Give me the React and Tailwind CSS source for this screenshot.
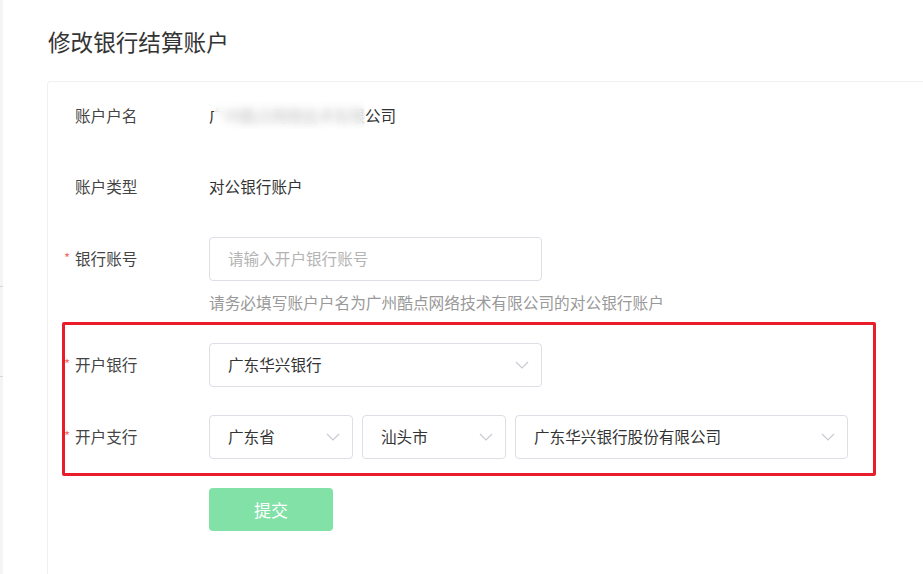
import React from "react";

const font = { fontFamily: '"Noto Sans CJK SC", "Noto Sans", sans-serif' };

const Chevron = () => (
  <svg width="14" height="8" viewBox="0 0 14 8" className="shrink-0">
    <polyline points="1,1 7,7 13,1" fill="none" stroke="#c8cbd1" strokeWidth="1.2" />
  </svg>
);

const Select = ({ value, width }) => (
  <div
    className={`h-[44px] ${width} border border-[#dcdfe6] rounded-[4px] flex items-center justify-between pl-[18px] pr-[12px] text-[15.6px] text-[#333]`}
  >
    <span>{value}</span>
    <Chevron />
  </div>
);

const Label = ({ children, required }) => (
  <div className="w-[134px] shrink-0 relative text-[15.6px] text-[#444]">
    {required && (
      <span className="absolute left-[-11px] top-[1px] text-[#f56c6c] text-[13px]">*</span>
    )}
    {children}
  </div>
);

const App = () => {
  return (
    <div className="w-[923px] h-[574px] bg-white flex overflow-hidden" style={font}>
      <div className="w-[3px] shrink-0 bg-[#f4f4f4] relative">
        <div className="absolute top-[286px] left-0 w-[3px] h-px bg-[#d6d6d6]" />
        <div className="absolute top-[376px] left-0 w-[3px] h-px bg-[#d6d6d6]" />
      </div>
      <div className="flex-1 pl-[44px]">
        <h1 className="pl-px pt-[27px] h-[81px] text-[22.6px] leading-[30px] text-[#333] font-normal">
          修改银行结算账户
        </h1>
        <div className="relative border-t border-l border-[#f0f0f0] rounded-tl-[4px] h-[500px] w-[900px] pt-[12px] pl-[27px]">
          <div className="h-[44px] flex items-center">
            <Label>账户户名</Label>
            <div className="relative text-[15.6px] text-[#333] whitespace-nowrap">
              广州酷点网络技术有限公司
              {/* redaction over the middle of the name */}
              <div className="absolute left-[5px] top-1/2 -translate-y-1/2 w-[151px] h-[27px] bg-white/70 backdrop-blur-[4px]" />
            </div>
          </div>

          <div className="h-[44px] flex items-center mt-[27px]">
            <Label>账户类型</Label>
            <span className="text-[15.6px] text-[#333]">对公银行账户</span>
          </div>

          <div className="h-[44px] flex items-center mt-[28px]">
            <Label required>银行账号</Label>
            <div className="h-[44px] w-[333px] border border-[#dcdfe6] rounded-[4px] flex items-center pl-[18px] text-[15.6px] text-[#b4b4b4]">
              请输入开户银行账号
            </div>
          </div>
          <div className="pl-[134px] mt-[11px] text-[15.7px] leading-[22px] text-[#999]">
            请务必填写账户户名为广州酷点网络技术有限公司的对公银行账户
          </div>

          <div className="h-[44px] flex items-center mt-[29px]">
            <Label required>开户银行</Label>
            <Select value="广东华兴银行" width="w-[333px]" />
          </div>

          <div className="h-[44px] flex items-center mt-[28px]">
            <Label required>开户支行</Label>
            <div className="flex gap-[9px]">
              <Select value="广东省" width="w-[144px]" />
              <Select value="汕头市" width="w-[144px]" />
              <Select value="广东华兴银行股份有限公司" width="w-[333px]" />
            </div>
          </div>

          <div className="pl-[134px] mt-[29px]">
            <button className="w-[124px] h-[43px] rounded-[4px] bg-[#81e1a7] text-white text-[17px]">
              提交
            </button>
          </div>

          <div className="absolute left-[14px] top-[240px] w-[814px] h-[154px] border-[3px] border-[#e91c2a] rounded-[2px] pointer-events-none" />
        </div>
      </div>
    </div>
  );
};

export default App;
